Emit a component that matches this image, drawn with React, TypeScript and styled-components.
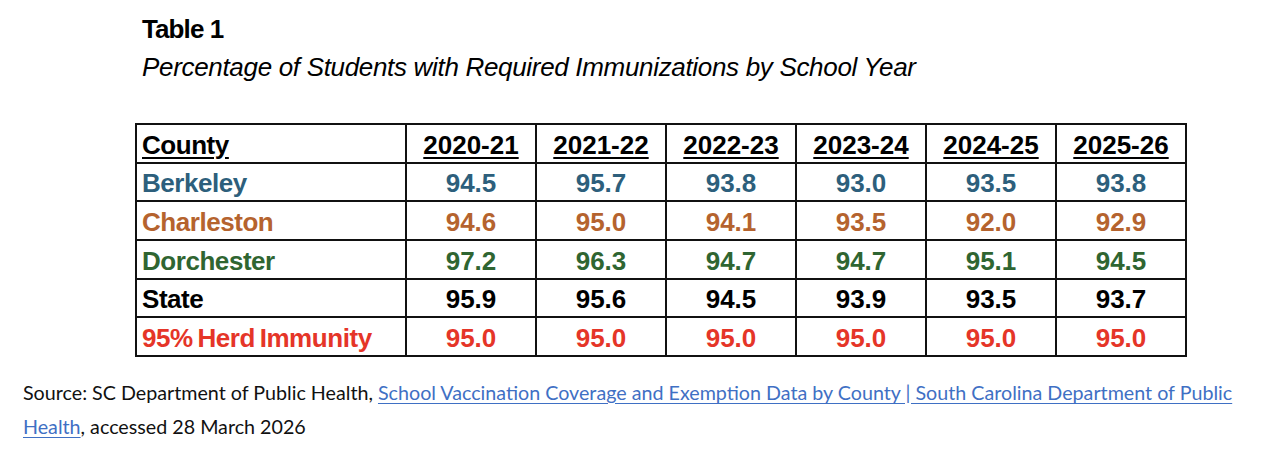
import React from "react";
import styled, { createGlobalStyle } from "styled-components";

const Global = createGlobalStyle`
  html, body { margin: 0; padding: 0; background: #fff; }
  body { font-family: "Liberation Sans", Arial, sans-serif; color: #000; }
`;

const Page = styled.div`
  width: 1272px;
  height: 450px;
  overflow: hidden;
  display: flex;
  flex-direction: column;
`;

const Figure = styled.section`
  margin-left: 135px;
  padding-top: 14px;
  display: flex;
  flex-direction: column;
`;

const Title = styled.h1`
  margin: 0;
  padding-left: 7px;
  font: bold 26px/30px "Liberation Sans", Arial, sans-serif;
  letter-spacing: -0.9px;
`;

const Subtitle = styled.h2`
  margin: 8px 0 0;
  padding-left: 7px;
  font: italic 400 26px/30px "Liberation Sans", Arial, sans-serif;
  letter-spacing: -0.32px;
`;

const Table = styled.table`
  margin-top: 41px;
  border-collapse: collapse;
  table-layout: fixed;
  width: 1052px;
  font: bold 26px/28px "Liberation Sans", Arial, sans-serif;
`;

const Row = styled.tr`
  height: 38.67px;
`;

const Cell = styled.td<{ $color?: string; $first?: boolean }>`
  border: 2px solid #111;
  padding: ${(p) => (p.$first ? "3px 0 0 5px" : "3px 0 0")};
  text-align: ${(p) => (p.$first ? "left" : "center")};
  color: ${(p) => p.$color || "#000"};
  white-space: nowrap;
  vertical-align: middle;
  letter-spacing: ${(p) => (p.$first ? "-0.45px" : "0")};
  word-spacing: ${(p) => (p.$first ? "-2px" : "0")};
`;

const HeadCell = styled(Cell).attrs({ as: "th" })`
  font-weight: bold;
  text-decoration: underline;
  text-decoration-thickness: 2px;
  text-underline-offset: 3px;
`;

const Source = styled.p`
  margin: 19px 0 0 23px;
  font: 400 19.7px/34.5px "Lato", "Open Sans", sans-serif;
  color: #111;
  white-space: nowrap;
`;

const Link = styled.a`
  color: #3f70c4;
  text-decoration: underline;
  text-underline-offset: 3px;
`;

const years = ["2020-21", "2021-22", "2022-23", "2023-24", "2024-25", "2025-26"];

const rows: { name: string; color: string; values: string[] }[] = [
  { name: "Berkeley", color: "#2d5f7c", values: ["94.5", "95.7", "93.8", "93.0", "93.5", "93.8"] },
  { name: "Charleston", color: "#b5632e", values: ["94.6", "95.0", "94.1", "93.5", "92.0", "92.9"] },
  { name: "Dorchester", color: "#2f6531", values: ["97.2", "96.3", "94.7", "94.7", "95.1", "94.5"] },
  { name: "State", color: "#000000", values: ["95.9", "95.6", "94.5", "93.9", "93.5", "93.7"] },
  { name: "95% Herd Immunity", color: "#e53528", values: ["95.0", "95.0", "95.0", "95.0", "95.0", "95.0"] },
];

export default function App() {
  return (
    <Page>
      <Global />
      <Figure>
        <Title>Table 1</Title>
        <Subtitle>Percentage of Students with Required Immunizations by School Year</Subtitle>
        <Table>
          <colgroup>
            <col style={{ width: 270 }} />
            {years.map((y) => (
              <col key={y} style={{ width: 130 }} />
            ))}
          </colgroup>
          <thead>
            <Row>
              <HeadCell $first>County</HeadCell>
              {years.map((y) => (
                <HeadCell key={y}>{y}</HeadCell>
              ))}
            </Row>
          </thead>
          <tbody>
            {rows.map((r) => (
              <Row key={r.name}>
                <Cell $first $color={r.color}>{r.name}</Cell>
                {r.values.map((v, i) => (
                  <Cell key={i} $color={r.color}>{v}</Cell>
                ))}
              </Row>
            ))}
          </tbody>
        </Table>
      </Figure>
      <Source>
        Source: SC Department of Public Health,{" "}
        <Link href="#">
          School Vaccination Coverage and Exemption Data by County | South Carolina Department of Public
          <br />
          Health
        </Link>
        , accessed 28 March 2026
      </Source>
    </Page>
  );
}
